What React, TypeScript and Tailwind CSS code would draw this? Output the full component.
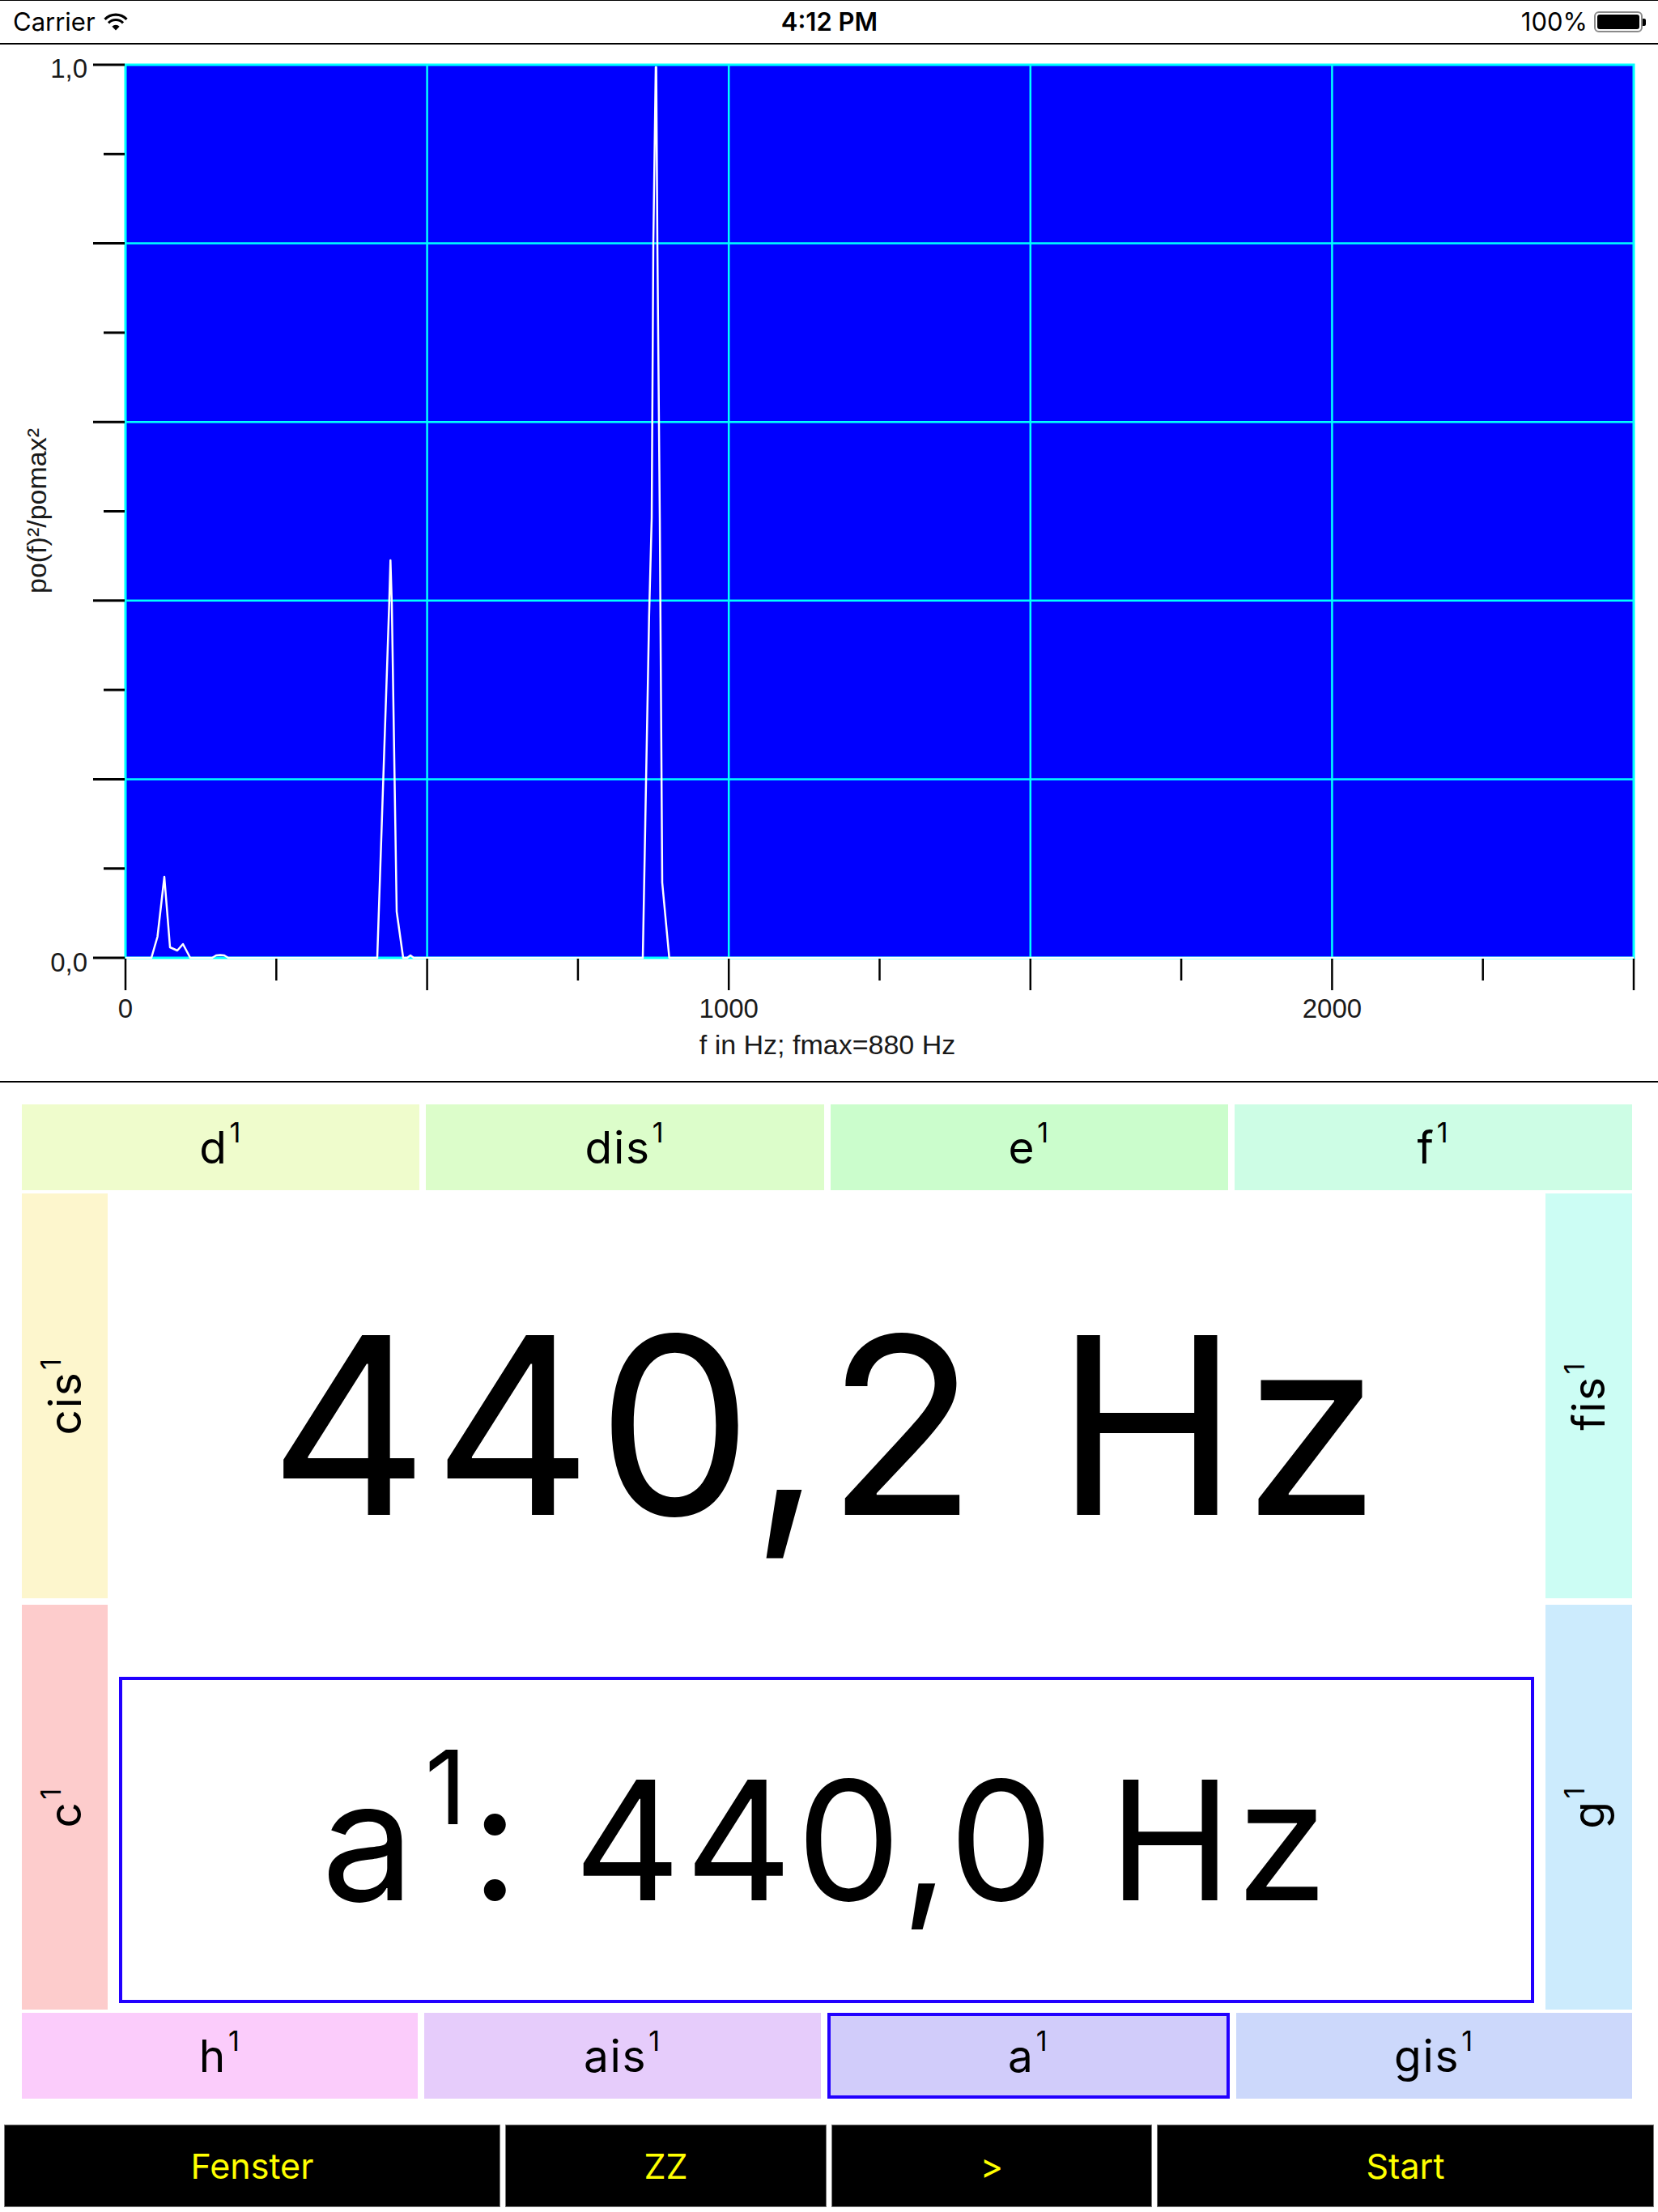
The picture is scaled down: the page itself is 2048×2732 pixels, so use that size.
import React from "react";

const SANS = "font-['Inter','Liberation_Sans',sans-serif]";

type Note = { name: string; bg: string; selected?: boolean };

const TOP_ROW: Note[] = [
  { name: "d", bg: "bg-[#effccc]" },
  { name: "dis", bg: "bg-[#dcfdca]" },
  { name: "e", bg: "bg-[#cbfdcc]" },
  { name: "f", bg: "bg-[#cdfde5]" },
];

const BOTTOM_ROW: Note[] = [
  { name: "h", bg: "bg-[#fbccfb]" },
  { name: "ais", bg: "bg-[#e6ccfb]" },
  { name: "a", bg: "bg-[#d1ccfa]", selected: true },
  { name: "gis", bg: "bg-[#ccd8fb]" },
];

const LEFT_COL: Note[] = [
  { name: "cis", bg: "bg-[#fdf6cd]" },
  { name: "c", bg: "bg-[#fdcccc]" },
];

const RIGHT_COL: Note[] = [
  { name: "fis", bg: "bg-[#ccfdf4]" },
  { name: "g", bg: "bg-[#ccebfd]" },
];

const TOOLBAR = [
  { label: "Fenster", w: "w-[613px]" },
  { label: "ZZ", w: "w-[397px]" },
  { label: ">", w: "w-[396px]" },
  { label: "Start", w: "w-[614px]" },
];

function Sup({ children }: { children: React.ReactNode }) {
  return <span className="relative -top-[0.74em] ml-[0.06em] text-[0.62em]">{children}</span>;
}

function NoteLabel({ name }: { name: string }) {
  return (
    <span className="whitespace-nowrap leading-none tracking-[0.03em]">
      {name}
      <Sup>1</Sup>
    </span>
  );
}

function NoteCell({ note, vertical }: { note: Note; vertical?: boolean }) {
  return (
    <div
      className={`flex flex-1 items-center justify-center text-[55px] text-black ${note.bg} ${
        note.selected ? "border-4 border-[#2200ff]" : ""
      }`}
    >
      {vertical ? (
        <div className="-rotate-90">
          <NoteLabel name={note.name} />
        </div>
      ) : (
        <NoteLabel name={note.name} />
      )}
    </div>
  );
}

function WifiIcon() {
  return (
    <svg width="30" height="24" viewBox="0 0 30 24">
      <path d="M1.5 8.8 A19 19 0 0 1 28.5 8.8" stroke="black" strokeWidth="3.2" fill="none" />
      <path d="M6 13.3 A12.6 12.6 0 0 1 24 13.3" stroke="black" strokeWidth="3.2" fill="none" />
      <path d="M10.4 17.8 A6.3 6.3 0 0 1 19.6 17.8 L15 22.6 Z" fill="black" />
    </svg>
  );
}

function StatusBar() {
  return (
    <div className="grid h-[55px] grid-cols-3 items-center border-t border-b-2 border-black pl-4 pr-[15px] text-[31px] text-black">
      <div className="flex items-center gap-[10px]">
        <span>Carrier</span>
        <WifiIcon />
      </div>
      <div className="text-center font-semibold">4:12 PM</div>
      <div className="flex items-center justify-end gap-[8px]">
        <span>100%</span>
        <div className="flex items-center">
          <div className="h-[26px] w-[60px] rounded-[6px] border-2 border-[#8a8a8a] p-[2px]">
            <div className="h-full w-full rounded-[3px] bg-black" />
          </div>
          <div className="h-[9px] w-[4px] rounded-r-[2px] bg-black" />
        </div>
      </div>
    </div>
  );
}

function Spectrum() {
  const x0 = 155;
  const x1 = 2018;
  const y0 = 80;
  const y1 = 1183;
  const fx = (f: number) => x0 + (f / 2500) * (x1 - x0);
  const dy = (y1 - y0) / 5;

  const hLines = [1, 2, 3, 4].map((k) => y0 + dy * k);
  const vLines = [500, 1000, 1500, 2000].map(fx);
  const yMajor = [0, 1, 2, 3, 4, 5].map((k) => y0 + dy * k);
  const yMinor = [0, 1, 2, 3, 4].map((k) => y0 + dy * (k + 0.5));
  const xMajor = [0, 500, 1000, 1500, 2000, 2500].map(fx);
  const xMinor = [250, 750, 1250, 1750, 2250].map(fx);

  // measured spectrum trace, page coordinates
  const trace = [
    [155, 1183],
    [187, 1183],
    [194.5, 1157],
    [203, 1083],
    [210, 1170],
    [219, 1174],
    [226, 1166],
    [235, 1183],
    [262, 1183],
    [267, 1180],
    [272, 1179.5],
    [277, 1180],
    [282, 1183],
    [466, 1183],
    [480.7, 747],
    [482.3, 692],
    [484, 747],
    [490, 1126],
    [498, 1183],
    [503, 1183],
    [507, 1180],
    [511, 1183],
    [794, 1183],
    [801.8, 760],
    [805, 640],
    [807, 301],
    [810, 83],
    [810.6, 83],
    [812, 301],
    [815, 640],
    [818, 1090],
    [826.7, 1183],
    [2018, 1183],
  ]
    .map(([x, y]) => `${x},${y}`)
    .join(" ");

  const font = "'Liberation Sans', Arial, sans-serif";

  return (
    <svg width={2048} height={1280} viewBox="0 55 2048 1280" className="block">
      <rect x={x0} y={y0} width={x1 - x0} height={y1 - y0} fill="#0000ff" />
      {hLines.map((y) => (
        <line key={`h${y}`} x1={x0} x2={x1} y1={y} y2={y} stroke="#00ffff" strokeWidth={2.5} />
      ))}
      {vLines.map((x) => (
        <line key={`v${x}`} x1={x} x2={x} y1={y0} y2={y1} stroke="#00ffff" strokeWidth={2.5} />
      ))}
      <rect
        x={x0}
        y={y0}
        width={x1 - x0}
        height={y1 - y0}
        fill="none"
        stroke="#00ffff"
        strokeWidth={3}
      />
      <polyline points={trace} fill="none" stroke="#ffffff" strokeWidth={2.5} strokeLinejoin="round" />

      {yMajor.map((y) => (
        <line key={`ym${y}`} x1={115} x2={154} y1={y} y2={y} stroke="black" strokeWidth={3} />
      ))}
      {yMinor.map((y) => (
        <line key={`yn${y}`} x1={128} x2={154} y1={y} y2={y} stroke="black" strokeWidth={3} />
      ))}
      {xMajor.map((x) => (
        <line key={`xm${x}`} x1={x} x2={x} y1={1184} y2={1223} stroke="black" strokeWidth={2.5} />
      ))}
      {xMinor.map((x) => (
        <line key={`xn${x}`} x1={x} x2={x} y1={1184} y2={1211} stroke="black" strokeWidth={2.5} />
      ))}

      <g fontFamily={font} fontSize={33} fill="#1a1a1a">
        <text x={108} y={96} textAnchor="end">
          1,0
        </text>
        <text x={108} y={1200} textAnchor="end">
          0,0
        </text>
        <text x={fx(0)} y={1257} textAnchor="middle">
          0
        </text>
        <text x={fx(1000)} y={1257} textAnchor="middle">
          1000
        </text>
        <text x={fx(2000)} y={1257} textAnchor="middle">
          2000
        </text>
        <text x={1022} y={1302} textAnchor="middle" fontSize={34}>
          f in Hz; fmax=880 Hz
        </text>
        <text transform="translate(57,631) rotate(-90)" textAnchor="middle" fontSize={34}>
          po(f)²/pomax²
        </text>
      </g>
    </svg>
  );
}

export default function App() {
  return (
    <div className={`flex h-[2732px] w-[2048px] flex-col bg-white ${SANS}`}>
      <StatusBar />

      <div className="h-[1282px] border-b-2 border-black">
        <Spectrum />
      </div>

      <div className="flex flex-col gap-[4px] pl-[27px] pr-[32px] pt-[27px]">
        <div className="flex h-[106px] gap-[8px]">
          {TOP_ROW.map((n) => (
            <NoteCell key={n.name} note={n} />
          ))}
        </div>

        <div className="grid h-[1008px] grid-cols-[106px_1fr_107px]">
          <div className="flex flex-col gap-[8px]">
            {LEFT_COL.map((n) => (
              <NoteCell key={n.name} note={n} vertical />
            ))}
          </div>

          <div className="flex flex-col">
            <div className="flex flex-1 items-center justify-center pb-[24px] text-[305px] leading-none tracking-[0.018em] text-black">
              440,2 Hz
            </div>
            <div className="mx-[14px] mb-[8px] flex h-[403px] items-center justify-center border-4 border-[#2200ff] text-[205px] leading-none tracking-[0.025em] text-black">
              <span>
                a<Sup>1</Sup>: 440,0 Hz
              </span>
            </div>
          </div>

          <div className="flex flex-col gap-[8px]">
            {RIGHT_COL.map((n) => (
              <NoteCell key={n.name} note={n} vertical />
            ))}
          </div>
        </div>

        <div className="flex h-[106px] gap-[8px]">
          {BOTTOM_ROW.map((n) => (
            <NoteCell key={n.name} note={n} />
          ))}
        </div>
      </div>

      <div className="mt-[32px] flex h-[102px] gap-[6px] px-[5px]">
        {TOOLBAR.map((b) => (
          <button
            key={b.label}
            type="button"
            className={`flex ${b.w} items-center justify-center border border-[#777] bg-black text-[43px] text-[#ffff00]`}
          >
            {b.label}
          </button>
        ))}
      </div>
    </div>
  );
}
